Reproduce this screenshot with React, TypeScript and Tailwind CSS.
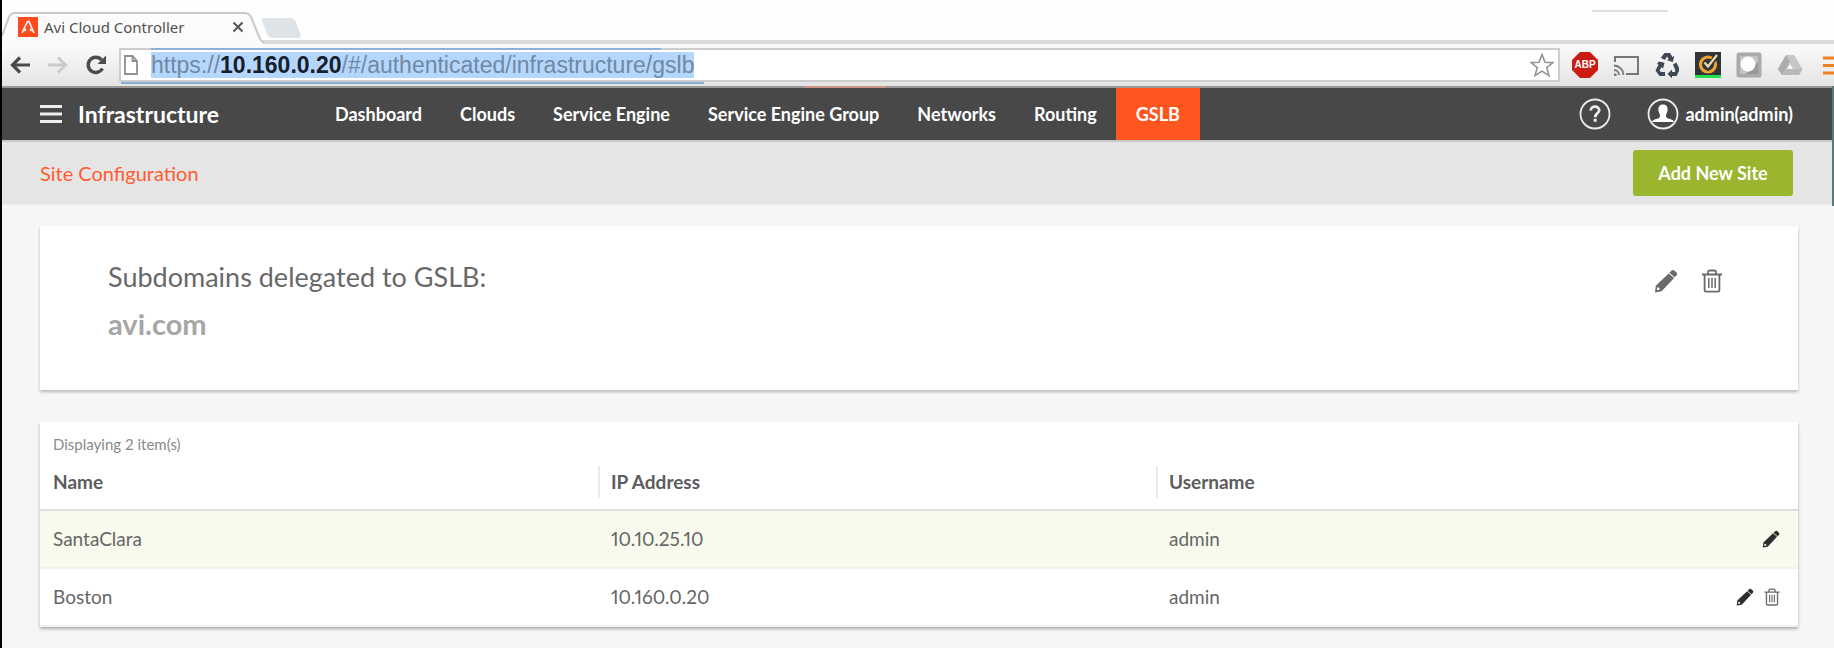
import React from "react";

const navItems = ["Dashboard", "Clouds", "Service Engine", "Service Engine Group", "Networks", "Routing", "GSLB"];

const sites = [
  { name: "SantaClara", ip: "10.10.25.10", user: "admin", removable: false },
  { name: "Boston", ip: "10.160.0.20", user: "admin", removable: true },
];

function Pencil({ className }: { className: string }) {
  return (
    <svg viewBox="0 0 24 24" className={className} fill="currentColor" aria-hidden="true">
      <path d="M17 2.200c.9-1.200 2.200-1.500 3.300-.6l2 1.700c1.100.9 1.100 2.300.1 3.300l-1.700 1.700-5.400-4.500z" />
      <path fillRule="evenodd" d="M14.700 4.400l5.400 4.500L7.600 22.200 1 23.400l.8-6.700zM3.200 18.300l-.3 2.900 2.900-.6c.2-1.300-1-2.300-2.600-2.300z" />
    </svg>
  );
}

function Trash({ className }: { className: string }) {
  return (
    <svg viewBox="0 0 20 24" className={className} fill="none" stroke="currentColor" strokeWidth="1.800" aria-hidden="true">
      <path d="M0 5.500h20M6 5V3.200C6 2 6.700 1.500 7.600 1.500h4.800c.9 0 1.600.5 1.600 1.700V5M2.600 5.500v15.500c0 1 .6 1.600 1.600 1.600h11.600c1 0 1.600-.6 1.600-1.600V5.500" />
      <path d="M6.800 9v10M10 9v10M13.200 9v10" strokeWidth="1.500" />
    </svg>
  );
}

function BrowserTabs() {
  return (
    <div className="relative flex h-10 items-end bg-[#fefefe]">
      <div className="relative z-10 -mb-1 flex h-8 w-[260px] shrink-0 items-center pb-[2px] pl-4 pr-[18px]">
        <svg className="absolute left-0 top-0 h-[34px] w-[262px]" viewBox="0 0 262 34" aria-hidden="true">
          <path d="M0 24L7 5Q9 0 13 0H242Q247 0 249 5L258 27Q260 31 262 32V34H0Z" fill="#fbfbfb" />
          <path d="M0 24L7 5Q9 1 13 1H242Q247 1 249 5L258 27Q260 30 262 31" fill="none" stroke="#c9c9c9" strokeWidth="2" />
        </svg>
        <svg className="relative h-5 w-5 shrink-0" viewBox="0 0 20 20" aria-hidden="true">
          <rect width="20" height="20" fill="#ff4a1c" />
          <path d="M4 16L9.500 4.500h1.500L16 16M6.500 14l1.500-2M13.500 14L12 12" fill="none" stroke="#fff" strokeWidth="1.600" />
        </svg>
        <span className="relative ml-[6px] grow whitespace-nowrap font-['Noto_Sans',sans-serif] text-[15px] leading-5 text-[#505050]">
          Avi Cloud Controller
        </span>
        <button aria-label="Close tab" className="relative h-3 w-3 text-[#555]">
          <svg viewBox="0 0 12 12" className="h-3 w-3" stroke="currentColor" strokeWidth="2">
            <path d="M1.500 1.500l9 9M10.500 1.500l-9 9" />
          </svg>
        </button>
      </div>
      <button aria-label="New tab" className="mb-[2px] h-5 w-10">
        <svg viewBox="0 0 40 20" className="h-5 w-10">
          <path d="M0 3Q-1 0 3 0H28Q32 0 33.500 3L38.500 16Q39.500 20 36 20H11Q7 20 5.500 17Z" fill="#dee3e8" />
        </svg>
      </button>
      <span className="absolute right-[166px] top-[10px] h-[2px] w-[76px] bg-[#dfdfdf]" />
    </div>
  );
}

function Extensions() {
  return (
    <div className="flex shrink-0 items-center gap-[15px]">
      <button aria-label="Adblock Plus" className="relative flex h-[26px] w-[26px] items-center justify-center">
        <svg viewBox="0 0 26 26" className="absolute inset-0 h-[26px] w-[26px]">
          <path d="M8 0h10l8 8v10l-8 8H8l-8-8V8z" fill="#cc1b12" />
        </svg>
        <span className="relative font-['Liberation_Sans',sans-serif] text-[10px] font-bold leading-none text-white">ABP</span>
      </button>
      <button aria-label="Cast" className="h-[26px] w-[26px]">
        <svg viewBox="0 0 26 26" className="h-[26px] w-[26px]" fill="none" stroke="#777" strokeWidth="2">
          <path d="M2 10V5H25V22H13" />
          <path d="M1 13.500a9.500 9.500 0 0 1 9.500 9.500M1 18a5 5 0 0 1 5 5" strokeWidth="1.800" />
          <path d="M1 21.500h2.500V24H1z" fill="#777" stroke="none" />
        </svg>
      </button>
      <button aria-label="Recycle" className="h-[26px] w-[26px]">
        <svg viewBox="0 0 26 26" className="h-[26px] w-[26px]" fill="#3e4853">
          <path d="M8.500 3.500L10.500 1h5.500l2.500 4 1.800-1-1.500 6-6-1.700 1.900-1L13 4.500 10.800 8 6.800 5.800z" />
          <path d="M5 9.500l5.500 1.300-1.300 5.500-1.700-1L5.500 18.500 7 20h4v4H5.500L1.500 18.500 4.500 12.800 3 11.800z" />
          <path d="M19 12.500l3.500-2 2.500 5.500v3L22.500 24H18v2.200L13.500 22l4.500-4.500V20h2.800l.7-1.500z" />
        </svg>
      </button>
      <button aria-label="Norton" className="h-[26px] w-[26px]">
        <svg viewBox="0 0 26 26" className="h-[26px] w-[26px]">
          <rect width="26" height="23" fill="#30353a" />
          <rect y="23" width="26" height="3" fill="#22e04c" />
          <circle cx="13" cy="12.500" r="7.500" fill="none" stroke="#f3a32b" strokeWidth="3.200" />
          <path d="M9.500 11.500l3.500 4L22.500 2.500" fill="none" stroke="#30353a" strokeWidth="5" />
          <path d="M9.500 10.500l3.500 4L22 3" fill="none" stroke="#ecdcae" strokeWidth="2.200" />
        </svg>
      </button>
      <button aria-label="Screen capture" className="h-[26px] w-[26px]">
        <svg viewBox="0 0 26 26" className="h-[26px] w-[26px]">
          <rect x=".5" y=".5" width="25" height="25" rx="2.500" fill="#aaa" />
          <rect x="4" y="4" width="18" height="18" fill="#c3c3c3" />
          <path d="M22 10v12H10z" fill="#989898" />
          <circle cx="12" cy="12" r="7.500" fill="#fff" />
        </svg>
      </button>
      <button aria-label="Drive" className="h-[26px] w-[26px]">
        <svg viewBox="0 0 26 26" className="h-[26px] w-[26px]">
          <path d="M9 3h8l8.500 14-3.500 6H5L1 17z" fill="#c6c6c6" />
          <path d="M9 3L1 17l4 6 8-13.500z" fill="#adadad" />
          <path d="M9.500 17h16l-3.500 6H5z" fill="#b9b9b9" />
          <path d="M13 11.500l3 5.500h-6z" fill="#f6f6f6" />
        </svg>
      </button>
      <button aria-label="Browser menu" className="h-[26px] w-4">
        <svg viewBox="0 0 16 26" className="h-[26px] w-4" stroke="#f08020" strokeWidth="3">
          <path d="M5 6h11M5 13.500h11M5 21h11" />
        </svg>
      </button>
    </div>
  );
}

function Toolbar() {
  return (
    <div className="relative flex h-12 items-center border-b-2 border-t-4 border-b-[#979797] border-t-[#dcdcdc] bg-linear-to-b from-[#fbfbfb] to-[#e4e4e4]">
      <div className="flex shrink-0 items-center gap-[18px] pl-2 pr-[13px]">
        <button aria-label="Back" className="h-5 w-5 text-[#4a4a4a]">
          <svg viewBox="0 0 20 20" className="h-5 w-5" fill="none" stroke="currentColor" strokeWidth="3.200">
            <path d="M20 10H3M10 2.500L2.500 10l7.500 7.500" />
          </svg>
        </button>
        <button aria-label="Forward" className="h-5 w-5 text-[#cacaca]">
          <svg viewBox="0 0 20 20" className="h-5 w-5" fill="none" stroke="currentColor" strokeWidth="3">
            <path d="M0 10h17M10 2.500l7.500 7.500-7.500 7.500" />
          </svg>
        </button>
        <button aria-label="Reload" className="h-5 w-5 text-[#4c4c4c]">
          <svg viewBox="0 0 20 20" className="h-5 w-5" fill="none" stroke="currentColor" strokeWidth="3.400">
            <path d="M16.500 13.500A7.600 7.600 0 1 1 15.500 4.800" />
            <path d="M20 .5v8.500h-8.500z" fill="currentColor" stroke="none" />
          </svg>
        </button>
      </div>
      <div className="relative flex h-[34px] min-w-0 grow items-center border-2 border-[#cdcdcd] bg-white pl-[3px] pr-1">
        <svg viewBox="0 0 14 20" className="h-5 w-[14px] shrink-0" fill="#fff" stroke="#8f8f8f" strokeWidth="1.800" aria-hidden="true">
          <path d="M1 1h7.500L13 6v13H1zM8.500 1v5H13" />
        </svg>
        <div
          role="textbox"
          aria-label="Address"
          contentEditable
          suppressContentEditableWarning
          className="ml-[13px] min-w-0 grow overflow-hidden whitespace-nowrap font-['Liberation_Sans',sans-serif] text-[23px] leading-[26px] outline-none"
        >
          <span className="inline-block bg-[#b5d6fd] text-[#7189a3]">
            https://<span className="font-bold text-[#16202c]">10.160.0.20</span>/#/authenticated/infrastructure/gslb
          </span>
        </div>
        <button aria-label="Bookmark this page" className="h-6 w-6 shrink-0">
          <svg viewBox="0 0 24 24" className="h-6 w-6" fill="#fff" stroke="#939393" strokeWidth="1.600">
            <path d="M12 1.500l3 7.700 8 .4-6.200 5 2.200 8-7-4.500-7 4.500 2.200-8L1 9.600l8-.4z" />
          </svg>
        </button>
        <span className="absolute -top-[2px] left-[30px] h-[2px] w-[510px] bg-[#8db1d8]" />
        <span className="absolute -bottom-1 left-0 h-[2px] w-[583px] bg-[#84aad6]" />
      </div>
      <div className="ml-3">
        <Extensions />
      </div>
      <span className="absolute -bottom-[2px] left-[802px] h-[2px] w-[82px] bg-[#cc9488]" />
    </div>
  );
}

function NavBar() {
  return (
    <header className="flex h-[54px] items-center border-b-2 border-[#c9c9c9] bg-[#484848] pl-[38px] pr-[41px] text-white">
      <button aria-label="Menu" className="h-5 w-[22px]">
        <svg viewBox="0 0 22 20" className="h-5 w-[22px]" stroke="#eee" strokeWidth="3">
          <path d="M0 2.500h22M0 10h22M0 17.500h22" />
        </svg>
      </button>
      <h1 className="ml-4 w-[238px] text-[23px] font-bold leading-7">Infrastructure</h1>
      <nav className="flex h-full grow">
        {navItems.map((item) => (
          <a
            key={item}
            href={"#" + item.toLowerCase().replace(/ /g, "-")}
            className={
              item === "GSLB"
                ? "flex items-center whitespace-nowrap bg-[#ff5620] px-5 text-[18px] font-bold"
                : "flex items-center whitespace-nowrap px-[19px] text-[18px] font-bold"
            }
          >
            {item}
          </a>
        ))}
      </nav>
      <button aria-label="Help" className="h-8 w-8">
        <svg viewBox="0 0 32 32" className="h-8 w-8" fill="none" stroke="#ececec">
          <circle cx="16" cy="16" r="14.500" strokeWidth="1.800" />
          <path d="M11.800 12.500c0-5 8.400-5 8.400-.3 0 3-4 3.300-4 7" strokeWidth="2.800" />
          <path d="M14.700 20.800h3v3h-3z" fill="#ececec" stroke="none" />
        </svg>
      </button>
      <button className="ml-9 flex items-center gap-[6px] text-[18px] font-bold">
        <svg viewBox="0 0 32 32" className="h-8 w-8" aria-hidden="true">
          <circle cx="16" cy="16" r="14.500" fill="none" stroke="#ececec" strokeWidth="1.800" />
          <path d="M16 6.500c3.200 0 4.800 2 4.600 5.200-.1 2.500-1.200 4-1.600 5.300-.4 2 .4 3 3 3.800 2.600.8 4.400 1.500 5.200 3.200H4.800c.8-1.700 2.600-2.400 5.200-3.200 2.600-.8 3.400-1.800 3-3.800-.4-1.300-1.500-2.800-1.600-5.300-.2-3.200 1.400-5.200 4.600-5.200z" fill="#fff" />
        </svg>
        admin(admin)
      </button>
    </header>
  );
}

export default function App() {
  return (
    <div className="relative min-h-screen border-l-2 border-black bg-[#f6f6f6] font-['Lato',sans-serif]">
      <BrowserTabs />
      <Toolbar />
      <NavBar />
      <span className="absolute right-0 top-[86px] h-[120px] w-[2px] bg-[#587a78]" />
      <div className="flex h-[63px] items-center justify-between border-b border-[#eeeeee] bg-[#e5e5e5] pl-[38px] pr-[41px]">
        <h2 className="text-[20px] leading-6 text-[#ff5c30]">Site Configuration</h2>
        <button className="h-[46px] w-[160px] rounded-[3px] bg-[#9ab52e] text-[18px] font-bold text-white">Add New Site</button>
      </div>
      <main className="flex flex-col gap-8 pb-5 pl-[38px] pr-9 pt-[21px]">
        <section className="flex items-start justify-between bg-white pb-[49px] pl-[68px] pr-[76px] pt-[34px] shadow-[0_2px_3px_rgba(0,0,0,0.25)]">
          <div>
            <h3 className="text-[27px] leading-[33px] text-[#686868]">Subdomains delegated to GSLB:</h3>
            <p className="mt-[14px] text-[29px] font-bold leading-[34px] text-[#a6a6a6]">avi.com</p>
          </div>
          <div className="flex gap-6 pt-[9px] text-[#6a6a6a]">
            <button aria-label="Edit subdomains">
              <Pencil className="h-6 w-6" />
            </button>
            <button aria-label="Delete subdomains">
              <Trash className="h-6 w-5" />
            </button>
          </div>
        </section>
        <section className="bg-white shadow-[0_2px_3px_rgba(0,0,0,0.3)]">
          <p className="h-9 pl-[13px] pt-3 text-[15px] leading-5 text-[#8a8a8a]">Displaying 2 item(s)</p>
          <table className="w-full table-fixed border-collapse text-left text-[19px] text-[#666]">
            <thead>
              <tr className="h-[52px] border-b-2 border-[#dcdedb] text-[#5c5c5c]">
                <th className="w-[31.74%] pb-1 font-bold">
                  <div className="h-8 pl-[13px] leading-8">Name</div>
                </th>
                <th className="w-[31.74%] pb-1 font-bold">
                  <div className="h-8 border-l-2 border-[#ebebeb] pl-[11px] leading-8">IP Address</div>
                </th>
                <th className="pb-1 font-bold">
                  <div className="h-8 border-l-2 border-[#ebebeb] pl-[11px] leading-8">Username</div>
                </th>
                <th aria-label="Actions" className="w-24" />
              </tr>
            </thead>
            <tbody>
              {sites.map((site) => (
                <tr key={site.name} className="h-[58px] border-b-2 border-[#f0f2ec] odd:bg-[#f8faed]">
                  <td className="pl-[13px]">{site.name}</td>
                  <td className="pl-[13px] proportional-nums">{site.ip}</td>
                  <td className="pl-[13px]">{site.user}</td>
                  <td className="pr-[18px]">
                    <div className="flex items-center justify-end gap-[10px]">
                      <button aria-label={"Edit " + site.name} className="text-[#2e2e2e]">
                        <Pencil className="h-[18px] w-[18px]" />
                      </button>
                      {site.removable && (
                        <button aria-label={"Delete " + site.name} className="text-[#6a6a6a]">
                          <Trash className="h-[18px] w-4" />
                        </button>
                      )}
                    </div>
                  </td>
                </tr>
              ))}
            </tbody>
          </table>
        </section>
      </main>
    </div>
  );
}
